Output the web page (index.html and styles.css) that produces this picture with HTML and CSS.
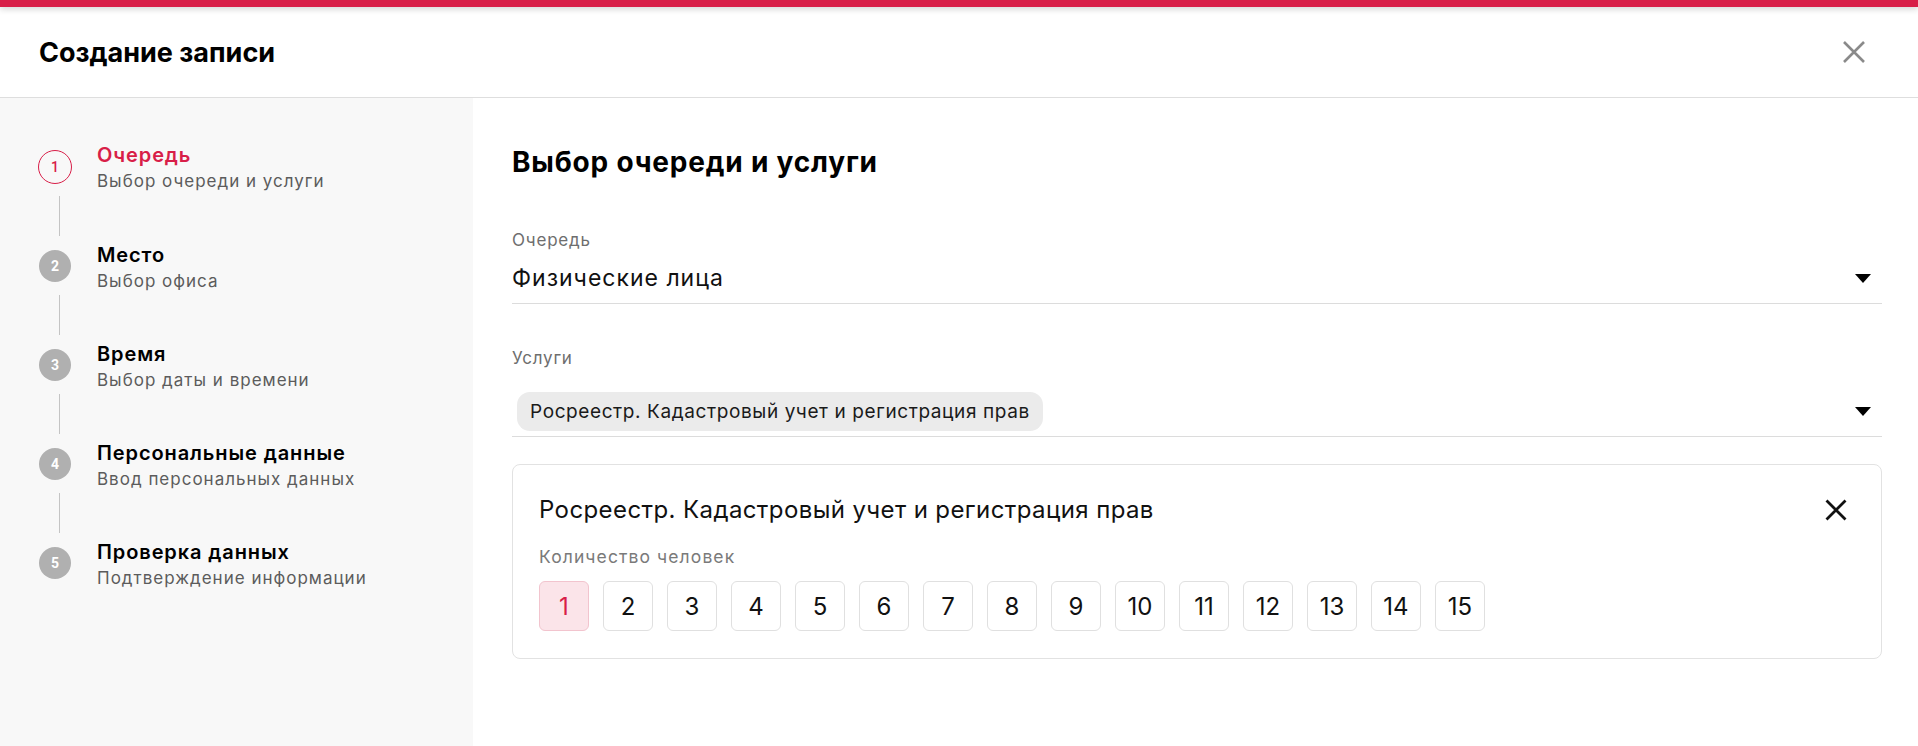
FILE: index.html
```html
<!DOCTYPE html>
<html lang="ru">
<head>
  <meta charset="UTF-8" />
  <title>Создание записи</title>
  <link rel="stylesheet" href="styles.css">
</head>
<body>
  <div id="topline"></div>
  <div id="header">
    <h1>Создание записи</h1>
    <button class="close" aria-label="Закрыть">
      <svg width="22" height="22" viewBox="0 0 22 22"><path d="M1 1L21 21M21 1L1 21" stroke="#8a8a8a" stroke-width="2.6" fill="none"/></svg>
    </button>
  </div>

  <div id="wrap">
    <div id="sidebar">
      <div class="step active">
        <div class="rail"><div class="num">1</div><div class="link"></div></div>
        <div class="step-text">
          <div class="step-title">Очередь</div>
          <div class="step-sub">Выбор очереди и услуги</div>
        </div>
      </div>
      <div class="step">
        <div class="rail"><div class="num">2</div><div class="link"></div></div>
        <div class="step-text">
          <div class="step-title">Место</div>
          <div class="step-sub">Выбор офиса</div>
        </div>
      </div>
      <div class="step">
        <div class="rail"><div class="num">3</div><div class="link"></div></div>
        <div class="step-text">
          <div class="step-title">Время</div>
          <div class="step-sub">Выбор даты и времени</div>
        </div>
      </div>
      <div class="step">
        <div class="rail"><div class="num">4</div><div class="link"></div></div>
        <div class="step-text">
          <div class="step-title">Персональные данные</div>
          <div class="step-sub">Ввод персональных данных</div>
        </div>
      </div>
      <div class="step">
        <div class="rail"><div class="num">5</div></div>
        <div class="step-text">
          <div class="step-title">Проверка данных</div>
          <div class="step-sub">Подтверждение информации</div>
        </div>
      </div>
    </div>

    <div id="main">
      <h2>Выбор очереди и услуги</h2>

      <div class="field">
        <div class="label">Очередь</div>
        <div class="select">
          <span class="value">Физические лица</span>
          <span class="arrow"></span>
        </div>
      </div>

      <div class="field services">
        <div class="label">Услуги</div>
        <div class="select">
          <span class="chip">Росреестр. Кадастровый учет и регистрация прав</span>
          <span class="arrow"></span>
        </div>
      </div>

      <div class="card">
        <div class="card-head">
          <div class="card-title">Росреестр. Кадастровый учет и регистрация прав</div>
          <button class="close" aria-label="Удалить">
            <svg width="22" height="22" viewBox="0 0 22 22"><path d="M1.5 1.5L20.5 20.5M20.5 1.5L1.5 20.5" stroke="#111" stroke-width="2.8" fill="none"/></svg>
          </button>
        </div>
        <div class="label">Количество человек</div>
        <div class="counts">
          <button class="count selected">1</button>
          <button class="count">2</button>
          <button class="count">3</button>
          <button class="count">4</button>
          <button class="count">5</button>
          <button class="count">6</button>
          <button class="count">7</button>
          <button class="count">8</button>
          <button class="count">9</button>
          <button class="count">10</button>
          <button class="count">11</button>
          <button class="count">12</button>
          <button class="count">13</button>
          <button class="count">14</button>
          <button class="count">15</button>
        </div>
      </div>
    </div>
  </div>
</body>
</html>
```

FILE: styles.css
```css
body {
  margin: 0;
  height: 746px;
  overflow: hidden;
  background: #fff;
  font-family: Inter, Roboto, sans-serif;
  color: #000;
  display: flex;
  flex-direction: column;
}
button {
  font-family: inherit;
  background: none;
  border: none;
  padding: 0;
  cursor: pointer;
}
#topline {
  height: 7px;
  background: #d81e48;
  box-shadow: 0 2px 6px rgba(0,0,0,0.18);
  position: relative;
  z-index: 2;
}
#header {
  height: 90px;
  border-bottom: 1px solid #dedede;
  display: flex;
  align-items: center;
  justify-content: space-between;
  padding: 0 53px 0 39px;
}
#header h1 {
  margin: 0;
  font-size: 27px;
  font-weight: 700;
}
.close {
  display: flex;
  width: 22px;
  height: 22px;
}

#wrap {
  flex: 1;
  display: flex;
  min-height: 0;
}
#sidebar {
  width: 473px;
  background: #f8f8f8;
  padding: 52px 0 0 38px;
  box-sizing: border-box;
}
.step {
  display: flex;
}
.rail {
  width: 34px;
  display: flex;
  flex-direction: column;
  align-items: center;
}
.num {
  width: 32px;
  height: 32px;
  border-radius: 50%;
  background: #b0b0b0;
  color: #fff;
  font-family: Roboto, sans-serif;
  font-size: 14px;
  font-weight: 700;
  display: flex;
  align-items: center;
  justify-content: center;
  box-sizing: border-box;
}
.active .num {
  width: 34px;
  height: 34px;
  background: none;
  border: 1px solid #d81e48;
  color: #d81e48;
  font-weight: 500;
}
.link {
  width: 1px;
  height: 40px;
  background: #c4c4c4;
  margin: 13px 0 14px 8px;
}
.active .link {
  margin-top: 12px;
}
.step-text {
  margin: -7px 0 0 25px;
}
.step-title {
  font-size: 20px;
  font-weight: 600;
  line-height: 24px;
  letter-spacing: 0.9px;
}
.active .step-title {
  color: #d81e48;
}
.step-sub {
  margin-top: 3px;
  font-size: 17px;
  line-height: 22px;
  letter-spacing: 1px;
  color: #5c5c5c;
}

#main {
  flex: 1;
  padding: 47px 36px 0 39px;
}
#main h2 {
  margin: 0 0 50px;
  font-size: 28px;
  font-weight: 700;
  line-height: 34px;
  letter-spacing: 0.8px;
}
.label {
  font-size: 17px;
  line-height: 22px;
  letter-spacing: 0.8px;
  color: #6e6e6e;
}
.select {
  display: flex;
  align-items: center;
  justify-content: space-between;
  border-bottom: 1px solid #dcdcdc;
  margin-top: 13px;
  padding-bottom: 11px;
}
.value {
  font-size: 23px;
  line-height: 28px;
  letter-spacing: 1px;
  color: #111;
}
.arrow {
  width: 0;
  height: 0;
  border-left: 8px solid transparent;
  border-right: 8px solid transparent;
  border-top: 9px solid #000;
  margin-right: 11px;
}
.services {
  margin-top: 43px;
}
.services .select {
  margin-top: 23px;
  padding-bottom: 5px;
}
.chip {
  margin-left: 5px;
  height: 39px;
  padding: 0 13px;
  border-radius: 13px;
  background: #ebebeb;
  font-size: 19px;
  letter-spacing: 0.6px;
  color: #1a1a1a;
  display: flex;
  align-items: center;
}

.card {
  margin-top: 27px;
  border: 1px solid #e2e2e2;
  border-radius: 8px;
  padding: 30px 34px 27px 26px;
}
.card-head {
  display: flex;
  align-items: center;
  justify-content: space-between;
  margin-bottom: 21px;
}
.card-title {
  font-size: 24px;
  line-height: 30px;
  letter-spacing: 0.4px;
  color: #111;
}
.card .label {
  font-size: 17.5px;
  letter-spacing: 1.1px;
  color: #7a7a7a;
}
.counts {
  display: flex;
  gap: 14px;
  margin-top: 13px;
}
.count {
  width: 50px;
  height: 50px;
  border: 1px solid #e0e0e0;
  border-radius: 6px;
  background: #fff;
  font-size: 24px;
  color: #111;
  box-sizing: border-box;
}
.count.selected {
  background: #fbe4e9;
  border-color: #f2c4ce;
  color: #d81e48;
}
```
